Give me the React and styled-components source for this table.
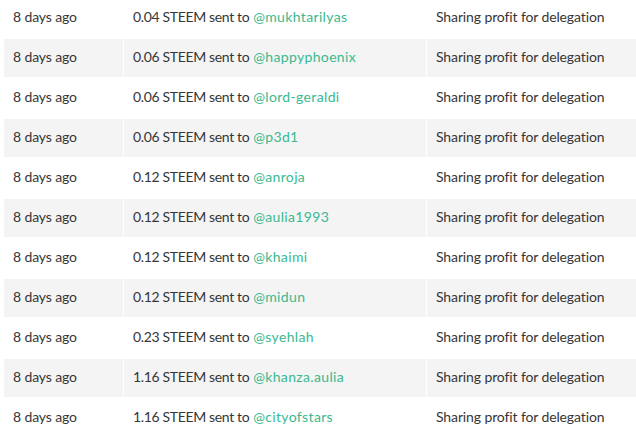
import React from 'react'
import styled, { createGlobalStyle } from 'styled-components'

const GlobalStyle = createGlobalStyle`
  body {
    margin: 0;
    background: #fff;
    font-family: Lato, "Noto Sans", sans-serif;
    color: #363636;
  }
`

const transfers = [
  ['0.04', 'mukhtarilyas'],
  ['0.06', 'happyphoenix'],
  ['0.06', 'lord-geraldi'],
  ['0.06', 'p3d1'],
  ['0.12', 'anroja'],
  ['0.12', 'aulia1993'],
  ['0.12', 'khaimi'],
  ['0.12', 'midun'],
  ['0.23', 'syehlah'],
  ['1.16', 'khanza.aulia'],
  ['1.16', 'cityofstars'],
]

const Table = styled.div`
  margin: -2px 0 0 4px;
  display: flex;
  flex-direction: column;
`

const Row = styled.div`
  display: grid;
  grid-template-columns: 119px 303px 1fr;
  height: 40px;
  background: ${p => (p.$striped ? '#f4f4f4' : '#fff')};
`

const Cell = styled.div`
  display: flex;
  align-items: center;
  padding: 0 0 3px 9px;
  border-top: 1px solid #fff;
  border-bottom: 1px solid #fff;
  border-left: ${p => (p.$first ? 'none' : '1px solid #fff')};
  font-size: 14px;
  white-space: nowrap;
  letter-spacing: ${p => (p.$tight ? '-0.35px' : '-0.12px')};
`

const Account = styled.a`
  color: #3ab98f;
  text-decoration: none;
  margin-left: 0.28em;
  letter-spacing: 0.35px;
`

export default function App() {
  return (
    <>
      <GlobalStyle />
      <Table>
        {transfers.map(([amount, user], i) => (
          <Row key={user} $striped={i % 2 === 1}>
            <Cell $first>8 days ago</Cell>
            <Cell $tight>
              {amount} STEEM sent to<Account href="#">@{user}</Account>
            </Cell>
            <Cell>Sharing profit for delegation</Cell>
          </Row>
        ))}
      </Table>
    </>
  )
}
